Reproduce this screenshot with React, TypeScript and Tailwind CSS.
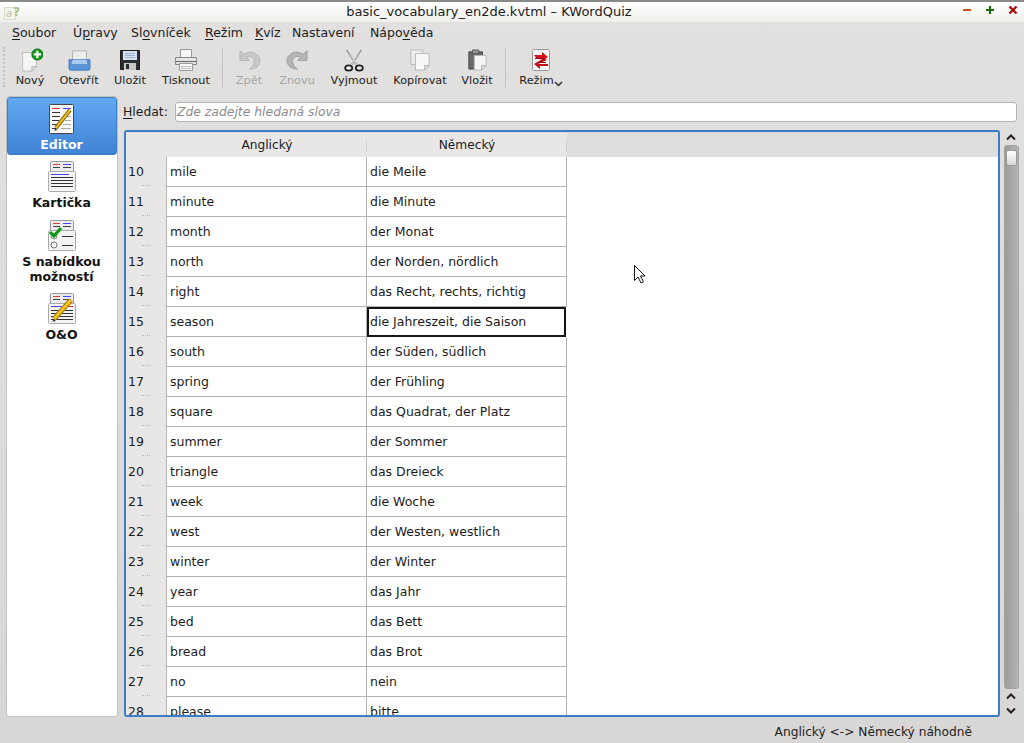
import type { ReactNode } from "react";

const rows = [
  ["10", "mile", "die Meile"],
  ["11", "minute", "die Minute"],
  ["12", "month", "der Monat"],
  ["13", "north", "der Norden, nördlich"],
  ["14", "right", "das Recht, rechts, richtig"],
  ["15", "season", "die Jahreszeit, die Saison"],
  ["16", "south", "der Süden, südlich"],
  ["17", "spring", "der Frühling"],
  ["18", "square", "das Quadrat, der Platz"],
  ["19", "summer", "der Sommer"],
  ["20", "triangle", "das Dreieck"],
  ["21", "week", "die Woche"],
  ["22", "west", "der Westen, westlich"],
  ["23", "winter", "der Winter"],
  ["24", "year", "das Jahr"],
  ["25", "bed", "das Bett"],
  ["26", "bread", "das Brot"],
  ["27", "no", "nein"],
  ["28", "please", "bitte"],
];

function NewIcon() {
  return (
    <svg width="26" height="24" viewBox="0 0 28 26">
      <path d="M6 5h15v15l-5 5H6z" fill="#f6f6f6" stroke="#bbb" />
      <path d="M16 25v-5h5z" fill="#ddd" stroke="#bbb" />
      <circle cx="22" cy="7" r="6" fill="#0a9a12" stroke="#056a0a" />
      <path d="M22 3v8M18 7h8" stroke="#fff" strokeWidth="2.4" />
    </svg>
  );
}

function OpenIcon() {
  return (
    <svg width="23" height="21" viewBox="0 0 26 24">
      <path d="M5 1h16v12H5z" fill="#ececec" stroke="#aaa" />
      <path d="M1 11h24v10a2 2 0 0 1-2 2H3a2 2 0 0 1-2-2z" fill="#5b93d8" stroke="#3f74b8" />
      <path d="M5 11h16l1 5H4z" fill="#a9c9ee" />
    </svg>
  );
}

function SaveIcon() {
  return (
    <svg width="20" height="20" viewBox="0 0 20 20">
      <path d="M.5.5h19v19H.5z" fill="#2b2e33" stroke="#1c1c1c" />
      <path d="M3 1h14v9H3z" fill="#d6e2f2" />
      <path d="M5 3.500h10M5 5.500h10M5 7.500h10" stroke="#9cb2d0" />
      <path d="M4 13h12v7H4z" fill="#c8c8c8" />
      <path d="M6 14h3v5H6z" fill="#2b2e33" />
    </svg>
  );
}

function PrintIcon() {
  return (
    <svg width="22" height="22" viewBox="0 0 22 22">
      <path d="M5.500.5h11v9h-11z" fill="#f6f6f6" stroke="#999" />
      <path d="M.5 8.500h21v7H.5z" fill="#e2e2e2" stroke="#888" />
      <path d="M1 12.500h20" stroke="#666" />
      <path d="M4.500 14.500h13v7h-13z" fill="#fafafa" stroke="#999" />
      <path d="M6 17.500h10M6 19.500h10" stroke="#bbb" />
    </svg>
  );
}

function UndoIcon({ flip }: { flip?: boolean }) {
  return (
    <svg width="23" height="21" viewBox="0 0 24 22" className={flip ? "-scale-x-100" : ""}>
      <path
        d="M2 1v10h10L8.500 7.500C13 5.500 17 8 17 12c0 3-2 6-5 8 6 0 11-3 11-9C23 4 13-1 6.500 4.500z"
        fill={flip ? "#b4b4b4" : "#c8c8c8"}
        stroke={flip ? "#a0a0a0" : "#b4b4b4"}
      />
    </svg>
  );
}

function CutIcon() {
  return (
    <svg width="24" height="23" viewBox="0 0 24 26">
      <path d="M4 1l11 17M20 1L9 18" stroke="#888" strokeWidth="2" fill="none" />
      <path d="M5 1l10 17M19 1L9 18" stroke="#eee" fill="none" />
      <ellipse cx="6" cy="21.500" rx="4" ry="3" fill="#eee" stroke="#222" strokeWidth="2" />
      <ellipse cx="18" cy="21.500" rx="4" ry="3" fill="#eee" stroke="#222" strokeWidth="2" />
    </svg>
  );
}

function CopyIcon() {
  return (
    <svg width="20" height="22" viewBox="0 0 22 24">
      <path d="M1 1h13v16H1z" fill="#eee" stroke="#b5b5b5" />
      <path d="M6 5h15v13l-5 5H6z" fill="#f8f8f8" stroke="#b5b5b5" />
      <path d="M16 23v-5h5z" fill="#ddd" stroke="#b5b5b5" />
    </svg>
  );
}

function PasteIcon() {
  return (
    <svg width="20" height="22" viewBox="0 0 22 24">
      <path d="M2 3h15v19H2z" fill="#6a6a6a" stroke="#444" />
      <path d="M6 1h7v4H6z" fill="#999" stroke="#555" />
      <path d="M8 7h13v11l-5 5H8z" fill="#f6f6f6" stroke="#b5b5b5" />
      <path d="M16 23v-5h5z" fill="#ddd" stroke="#b5b5b5" />
    </svg>
  );
}

function ModeIcon() {
  return (
    <svg width="18" height="22" viewBox="0 0 18 22">
      <rect x="0.500" y="0.500" width="17" height="21" rx="1" fill="#f6f6f6" stroke="#999" />
      <path d="M2 6h8V3l6 5-6 4 2-2H5z" fill="#d3131a" />
      <path d="M15 11l-9 4 2 0v0h8v2H8v3L2 15l10-6z" fill="#c00f16" />
      <path d="M3 9.500h8M6 13.500h8" stroke="#8f0b10" />
    </svg>
  );
}

// small vocabulary sheet behind the sidebar icons
function Sheet({ children }: { children: ReactNode }) {
  return (
    <svg width="28" height="32" viewBox="0 0 28 32">
      <rect x="2.500" y="0.500" width="23" height="14" rx="1" fill="#ececec" stroke="#999" />
      <path d="M5 3.500h7" stroke="#e33" />
      <path d="M15 3.500h8" stroke="#44f" />
      <path d="M5 6.500h7M15 6.500h8" stroke="#444" />
      {children}
    </svg>
  );
}

function EditorIcon() {
  return (
    <svg width="26" height="30" viewBox="0 0 26 30">
      <rect x="0.500" y="0.500" width="24" height="29" rx="1" fill="#fafafa" stroke="#444" />
      <path d="M3 4.500h8" stroke="#e33" />
      <path d="M14 4.500h8" stroke="#44f" />
      <path d="M3 8.500h8M3 12.500h8M3 16.500h7M3 20.500h5M3 24.500h4" stroke="#333" />
      <path d="M14 12.500h8M16 16.500h6M14 20.500h8M12 24.500h10" stroke="#aaa" />
      <path d="M21 6L7 24" stroke="#8a6a10" strokeWidth="4" />
      <path d="M21 6L7 24" stroke="#f0c020" strokeWidth="2" />
      <path d="M7 24l-2 3 3-1z" fill="#222" />
    </svg>
  );
}

function CardIcon() {
  return (
    <Sheet>
      <rect x="0.500" y="10.500" width="27" height="20" rx="1" fill="#f4f4f4" stroke="#aaa" />
      <path d="M3 13.500h18" stroke="#44f" />
      <path d="M3 16.500h22M3 19.500h22M3 22.500h22M3 25.500h22" stroke="#333" />
    </Sheet>
  );
}

function ChoiceIcon() {
  return (
    <Sheet>
      <rect x="0.500" y="10.500" width="27" height="20" rx="1" fill="#f4f4f4" stroke="#aaa" />
      <circle cx="6" cy="16" r="3" fill="#eee" stroke="#888" />
      <path d="M2 12l4 4 7-8" stroke="#0a9a12" strokeWidth="3" fill="none" />
      <circle cx="6" cy="25" r="3" fill="#fff" stroke="#777" />
      <path d="M14 16.500h11M14 25.500h11" stroke="#333" />
    </Sheet>
  );
}

function QaIcon() {
  return (
    <Sheet>
      <rect x="0.500" y="10.500" width="27" height="20" rx="1" fill="#f4f4f4" stroke="#aaa" />
      <path d="M3 13.500h11" stroke="#44f" />
      <path d="M16 13.500h9" stroke="#e33" />
      <path d="M3 17.500h22M3 20.500h22M3 23.500h22M3 26.500h22" stroke="#333" />
      <path d="M23 7L6 26" stroke="#a07a10" strokeWidth="5" />
      <path d="M23 7L6 26" stroke="#f5c21c" strokeWidth="3" />
      <path d="M6 26l-2 3 4-1z" fill="#444" />
    </Sheet>
  );
}

function Tool({ label, icon, off, w, chevron }: { label: string; icon: ReactNode; off?: boolean; w: string; chevron?: boolean }) {
  return (
    <div className={`flex shrink-0 flex-col items-center ${w}`}>
      <div className="flex h-[28px] items-center justify-center">{icon}</div>
      <div className={`flex h-[14px] items-center whitespace-nowrap text-[11.300px] ${off ? "text-[#a5a5a5]" : "text-[#1c1c1c]"}`}>
        {label}
        {chevron && (
          <svg width="9" height="6" viewBox="0 0 9 6" className="mt-[5px]">
            <path d="M1 1l3.500 3.500L8 1" stroke="#333" strokeWidth="1.500" fill="none" />
          </svg>
        )}
      </div>
    </div>
  );
}

function SideItem({ label, icon, active, h }: { label: ReactNode; icon: ReactNode; active?: boolean; h: string }) {
  return (
    <div
      className={`flex shrink-0 flex-col items-center pr-[1px] text-center text-[12.500px] font-bold leading-[15px] ${h} ${
        active ? "rounded-[3px] border border-[#3b7cc6] bg-gradient-to-b from-[#62a9f5] to-[#3f83d2] pt-[4px] text-white" : "text-[#141414]"
      }`}
    >
      <div className="flex h-[34px] items-center justify-center">{icon}</div>
      <div className="mt-[1px]">{label}</div>
    </div>
  );
}

function Arrow({ down }: { down?: boolean }) {
  return (
    <svg width="10" height="7" viewBox="0 0 10 7">
      <path d={down ? "M1 1.500l4 4 4-4" : "M1 5.500l4-4 4 4"} stroke="#222" strokeWidth="2" fill="none" />
    </svg>
  );
}

function Grip() {
  return <div className="absolute right-0 top-[7px] h-[11px] border-r border-dotted border-[#bbb]" />;
}

function U({ children }: { children: ReactNode }) {
  return <span className="underline underline-offset-2">{children}</span>;
}

export default function App() {
  return (
    <div className="flex h-[743px] w-[1024px] flex-col overflow-hidden bg-gradient-to-b from-[#e2e1e0] to-[#d8d7d5] font-['DejaVu_Sans',sans-serif] text-[#1c1c1c]">
      {/* title bar */}
      <div className="relative flex h-[22px] shrink-0 items-center justify-center border-t-2 border-[#8a8a88] bg-gradient-to-b from-white to-[#f0efeb] pr-[46px] text-[13px]">
        <svg width="18" height="16" viewBox="0 0 18 16" className="absolute left-[4px] top-[3px]">
          <rect x="0.500" y="2.500" width="11" height="12" fill="#f2f5ec" stroke="#d5dccb" />
          <text x="2" y="12" fontSize="10" fontStyle="italic" fill="#b9c2ad">a</text>
          <text x="9" y="11" fontSize="12" fontWeight="bold" fill="#9cc48a">?</text>
        </svg>
        <span>basic_vocabulary_en2de.kvtml – KWordQuiz</span>
        <div className="absolute right-[6px] top-[3px] flex items-center gap-[13px]">
          <svg width="10" height="10" viewBox="0 0 10 10"><path d="M1 5h8" stroke="#c8501a" strokeWidth="2" /></svg>
          <svg width="10" height="10" viewBox="0 0 10 10"><path d="M5 1v8M1 5h8" stroke="#1f6a0a" strokeWidth="2.200" /></svg>
          <svg width="10" height="10" viewBox="0 0 10 10"><path d="M1.500 1.500l7 7M8.500 1.500l-7 7" stroke="#a81010" strokeWidth="2.400" /></svg>
        </div>
      </div>

      {/* menu */}
      <div className="flex h-[22px] shrink-0 items-center whitespace-nowrap pl-[12px] text-[12.500px]">
        <span className="w-[61px]"><U>S</U>oubor</span>
        <span className="w-[58px]">Ú<U>p</U>ravy</span>
        <span className="w-[74px]">Sl<U>o</U>vníček</span>
        <span className="w-[50px]"><U>R</U>ežim</span>
        <span className="w-[37px]"><U>K</U>víz</span>
        <span className="w-[78px]">Nastavení</span>
        <span>Nápo<U>v</U>ěda</span>
      </div>

      {/* toolbar */}
      <div className="flex h-[52px] shrink-0 items-start pt-[2px]">
        <div className="ml-[3px] mr-[4px] mt-[1px] h-[40px] w-[3px] border-l-2 border-dotted border-[#c4c4c4]" />
        <Tool label="Nový" icon={<NewIcon />} w="w-[40px]" />
        <Tool label="Otevřít" icon={<OpenIcon />} w="w-[58px]" />
        <Tool label="Uložit" icon={<SaveIcon />} w="w-[44px]" />
        <Tool label="Tisknout" icon={<PrintIcon />} w="w-[68px]" />
        <div className="ml-[2px] mt-[2px] h-[40px] w-px bg-[#c6c5c3]" />
        <Tool label="Zpět" icon={<UndoIcon />} off w="w-[52px]" />
        <Tool label="Znovu" icon={<UndoIcon flip />} off w="w-[44px]" />
        <Tool label="Vyjmout" icon={<CutIcon />} w="w-[70px]" />
        <Tool label="Kopírovat" icon={<CopyIcon />} w="w-[62px]" />
        <Tool label="Vložit" icon={<PasteIcon />} w="w-[52px]" />
        <div className="ml-[2px] mt-[2px] h-[40px] w-px bg-[#c6c5c3]" />
        <Tool label="Režim" icon={<ModeIcon />} w="w-[70px]" chevron />
      </div>

      {/* body */}
      <div className="flex h-[621px] shrink-0 pl-[6px] pr-[5px]">
        <div className="flex h-full w-[112px] shrink-0 flex-col rounded-[3px] border border-[#c2c1bf] bg-white">
          <SideItem label="Editor" icon={<EditorIcon />} active h="h-[58px]" />
          <SideItem label="Kartička" icon={<CardIcon />} h="h-[59px] mt-[5px]" />
          <SideItem label={<>S nabídkou<br />možností</>} icon={<ChoiceIcon />} h="h-[73px]" />
          <SideItem label="O&O" icon={<QaIcon />} h="h-[60px]" />
        </div>

        <div className="ml-[6px] flex min-w-0 flex-1 flex-col">
          <div className="mb-[8px] mt-[6px] flex h-[20px] shrink-0 items-center gap-[7px] text-[12.400px]">
            <span className="-ml-[1px]"><U>H</U>ledat:</span>
            <div className="mr-[2px] flex h-[20px] flex-1 items-center rounded-[3px] border border-[#b3b3b1] bg-white pl-[1px] italic text-[#8c8c8c]">
              Zde zadejte hledaná slova
            </div>
          </div>
          <div className="flex min-h-0 flex-1 gap-[3px]">
            <div className="h-[587px] w-[876px] shrink-0 overflow-hidden rounded-[3px] border-2 border-[#3a7cc8] bg-white text-[12.500px]">
              <div className="flex h-[25px] bg-[#dededc] pt-[1px] text-[12.200px]">
                <div className="w-[41px] bg-[#e8e7e6]" />
                <div className="relative flex w-[200px] items-center justify-center bg-[#e8e7e6]">Anglický<Grip /></div>
                <div className="relative flex w-[200px] items-center justify-center bg-[#e8e7e6]">Německý<Grip /></div>
              </div>
              {rows.map(([n, a, b]) => (
                <div key={n} className="flex h-[30px]">
                  <div className="relative flex w-[41px] shrink-0 items-center border-r border-[#b4b4b4] bg-[#e8e7e6] pl-[2px]">
                    {n}
                    <div className="absolute bottom-[1px] left-[16px] h-0 w-[8px] border-t border-dotted border-[#bbb]" />
                  </div>
                  <div className="flex w-[200px] shrink-0 items-center border-b border-r border-[#b4b4b4] pl-[3px] pt-[2px]">{a}</div>
                  {n === "15" ? (
                    <div className="flex w-[199px] shrink-0 items-center border-2 border-[#141414] pl-[1px]">{b}</div>
                  ) : (
                    <div className="flex w-[200px] shrink-0 items-center border-b border-r border-[#b4b4b4] pl-[3px] pt-[2px]">{b}</div>
                  )}
                </div>
              ))}
            </div>
            <div className="flex h-[587px] w-[16px] shrink-0 flex-col items-center">
              <div className="flex h-[14px] items-center"><Arrow /></div>
              <div className="mt-[1px] h-[544px] w-[15px] shrink-0 rounded-[3px] border border-[#a3a3a1] bg-gradient-to-r from-[#9c9c9a] to-[#b5b5b3] p-[1px]">
                <div className="mt-[3px] h-[16px] rounded-[2px] border border-[#999] bg-gradient-to-b from-white to-[#d6d6d4]" />
              </div>
              <div className="flex h-[14px] items-center"><Arrow /></div>
              <div className="flex h-[14px] items-center"><Arrow down /></div>
            </div>
          </div>
        </div>
      </div>

      {/* status bar */}
      <div className="flex h-[26px] shrink-0 items-center justify-end pr-[52px] pt-[4px] text-[12.200px]">Anglický &lt;-&gt; Německý náhodně</div>

      {/* mouse cursor from the screenshot */}
      <svg width="13" height="21" viewBox="0 0 13 21" className="absolute left-[633px] top-[264px]">
        <path d="M1.500 1.500v15l3.500-3.500 3 6 2.500-1.200-3-5.800h4.500z" fill="#fff" stroke="#111" />
      </svg>
    </div>
  );
}
